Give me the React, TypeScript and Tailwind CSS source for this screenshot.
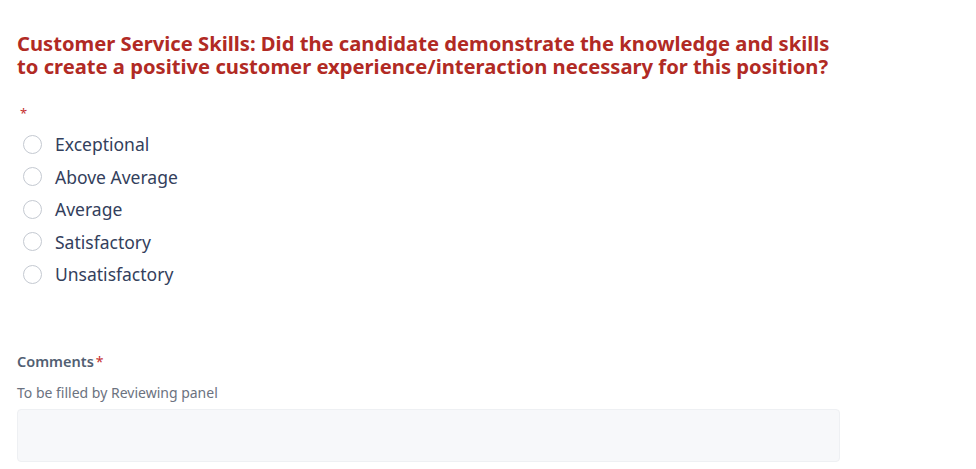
import React from "react";

const options = ["Exceptional", "Above Average", "Average", "Satisfactory", "Unsatisfactory"];

export default function App() {
  return (
    <div className="min-h-screen bg-white font-['Noto_Sans',sans-serif]">
      <div className="w-[860px] pl-[17px] pt-[32px]">
        <h2 className="text-[20.2px] font-bold leading-[23px] text-[#b12a24]">
          Customer Service Skills: Did the candidate demonstrate the knowledge and skills
          <br />
          to create a positive customer experience/interaction necessary for this position?
        </h2>

        <div className="mt-[29px] pl-[3px] text-[13px] leading-none text-[#c53030]">*</div>

        <div className="mt-[8px] flex flex-col">
          {options.map((o) => (
            <label key={o} className="flex h-[32.5px] items-center gap-[13px] pl-[6px]">
              <span className="h-[19px] w-[19px] rounded-full border border-[#c4c9d1] bg-white" />
              <span className="text-[17.5px] font-normal text-[#33405c]">{o}</span>
            </label>
          ))}
        </div>

        <div className="mt-[60px] flex items-baseline text-[14.5px] font-semibold text-[#525f73]">
          Comments
          <span className="ml-[2px] text-[14px] font-normal text-[#c53030]">*</span>
        </div>
        <div className="mt-[10px] text-[14px] text-[#6b7280]">To be filled by Reviewing panel</div>
        <div className="mt-[6px] h-[53px] w-[823px] rounded-[4px] border border-[#eef0f3] bg-[#f7f8fa]" />
      </div>
    </div>
  );
}
